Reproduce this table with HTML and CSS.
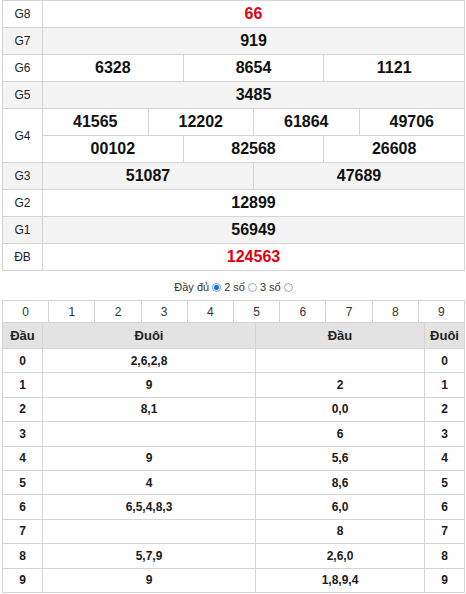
FILE: index.html
```html
<!DOCTYPE html>
<html lang="vi">
<head>
<meta charset="utf-8">
<link rel="stylesheet" href="styles.css">
</head>
<body>
<div class="page">
  <div class="results">
    <div class="row"><div class="lbl">G8</div><div class="vals"><div class="v red">66</div></div></div>
    <div class="row alt"><div class="lbl">G7</div><div class="vals"><div class="v">919</div></div></div>
    <div class="row"><div class="lbl">G6</div><div class="vals"><div class="v">6328</div><div class="v">8654</div><div class="v">1121</div></div></div>
    <div class="row alt"><div class="lbl">G5</div><div class="vals"><div class="v">3485</div></div></div>
    <div class="row g4"><div class="lbl">G4</div>
      <div class="stack">
        <div class="vals sub"><div class="v">41565</div><div class="v">12202</div><div class="v">61864</div><div class="v">49706</div></div>
        <div class="vals"><div class="v">00102</div><div class="v">82568</div><div class="v">26608</div></div>
      </div>
    </div>
    <div class="row alt"><div class="lbl">G3</div><div class="vals"><div class="v">51087</div><div class="v">47689</div></div></div>
    <div class="row"><div class="lbl">G2</div><div class="vals"><div class="v">12899</div></div></div>
    <div class="row alt"><div class="lbl">G1</div><div class="vals"><div class="v">56949</div></div></div>
    <div class="row"><div class="lbl">ĐB</div><div class="vals"><div class="v red">124563</div></div></div>
  </div>

  <div class="mode">Đầy đủ <span class="radio on"></span> 2 số <span class="radio"></span> 3 số <span class="radio"></span></div>

  <div class="loto">
    <div class="digits">
      <div>0</div><div>1</div><div>2</div><div>3</div><div>4</div><div>5</div><div>6</div><div>7</div><div>8</div><div>9</div>
    </div>
    <div class="lrow head"><div>Đầu</div><div>Đuôi</div><div>Đầu</div><div>Đuôi</div></div>
    <div class="lrow"><div>0</div><div>2,6,2,8</div><div></div><div>0</div></div>
    <div class="lrow"><div>1</div><div>9</div><div>2</div><div>1</div></div>
    <div class="lrow"><div>2</div><div>8,1</div><div>0,0</div><div>2</div></div>
    <div class="lrow"><div>3</div><div></div><div>6</div><div>3</div></div>
    <div class="lrow"><div>4</div><div>9</div><div>5,6</div><div>4</div></div>
    <div class="lrow"><div>5</div><div>4</div><div>8,6</div><div>5</div></div>
    <div class="lrow"><div>6</div><div>6,5,4,8,3</div><div>6,0</div><div>6</div></div>
    <div class="lrow"><div>7</div><div></div><div>8</div><div>7</div></div>
    <div class="lrow"><div>8</div><div>5,7,9</div><div>2,6,0</div><div>8</div></div>
    <div class="lrow"><div>9</div><div>9</div><div>1,8,9,4</div><div>9</div></div>
  </div>
</div>
</body>
</html>
```

FILE: styles.css
```css
html, body {
  margin: 0;
  padding: 0;
  background: #fff;
}
body {
  font-family: "Liberation Sans", Arial, sans-serif;
  color: #222;
}
.page {
  padding: 0 1px 0 2px;
}
.results {
  border: 1px solid #d4d4d4;
  border-bottom: none;
}
.row {
  display: flex;
  height: 26px;
  border-bottom: 1px solid #d4d4d4;
  background: #fff;
}
.row.alt {
  background: #f4f4f4;
}
.row.g4 {
  height: 53px;
}
.lbl {
  width: 39px;
  flex: none;
  border-right: 1px solid #d4d4d4;
  display: flex;
  align-items: center;
  justify-content: center;
  font-size: 12px;
  color: #222;
}
.vals {
  flex: 1;
  display: flex;
  min-width: 0;
}
.stack {
  flex: 1;
  display: flex;
  flex-direction: column;
}
.stack .vals {
  height: 26px;
  flex: none;
}
.stack .vals.sub {
  border-bottom: 1px solid #d4d4d4;
}
.v {
  flex: 1 1 0;
  display: flex;
  align-items: center;
  justify-content: center;
  font-size: 16px;
  font-weight: bold;
  color: #111;
}
.v + .v {
  border-left: 1px solid #d4d4d4;
}
.v.red {
  color: #e1000f;
}
.mode {
  height: 29px;
  display: flex;
  align-items: center;
  justify-content: center;
  gap: 3px;
  font-size: 11px;
  color: #333;
  padding-top: 2px;
  box-sizing: border-box;
}
.radio {
  width: 7px;
  height: 7px;
  border: 1px solid #a8a8a8;
  border-radius: 50%;
  background: #fff;
  display: inline-block;
  margin-top: 1px;
}
.radio.on {
  border-color: #5a9be6;
  background: radial-gradient(circle, #1a73e8 0, #1a73e8 2.2px, #fff 2.8px);
}
.loto {
  border: 1px solid #d4d4d4;
  border-bottom: none;
}
.digits {
  display: flex;
  height: 21px;
  border-bottom: 1px solid #d4d4d4;
}
.digits div {
  flex: 1 1 0;
  display: flex;
  align-items: center;
  justify-content: center;
  font-size: 12px;
  color: #333;
}
.digits div + div {
  border-left: 1px solid #d4d4d4;
}
.lrow {
  display: grid;
  grid-template-columns: 40px 213px 169px 1fr;
  height: 24.4px;
  box-sizing: border-box;
  border-bottom: 1px solid #d4d4d4;
}
.lrow div {
  display: flex;
  align-items: center;
  justify-content: center;
  font-size: 12px;
  font-weight: bold;
  color: #1a1a1a;
  border-right: 1px solid #d4d4d4;
}
.lrow div:last-child {
  border-right: none;
}
.lrow.head {
  height: 26px;
  background: #e3e3e3;
}
.lrow.head div {
  font-size: 13px;
  color: #222;
}
```
